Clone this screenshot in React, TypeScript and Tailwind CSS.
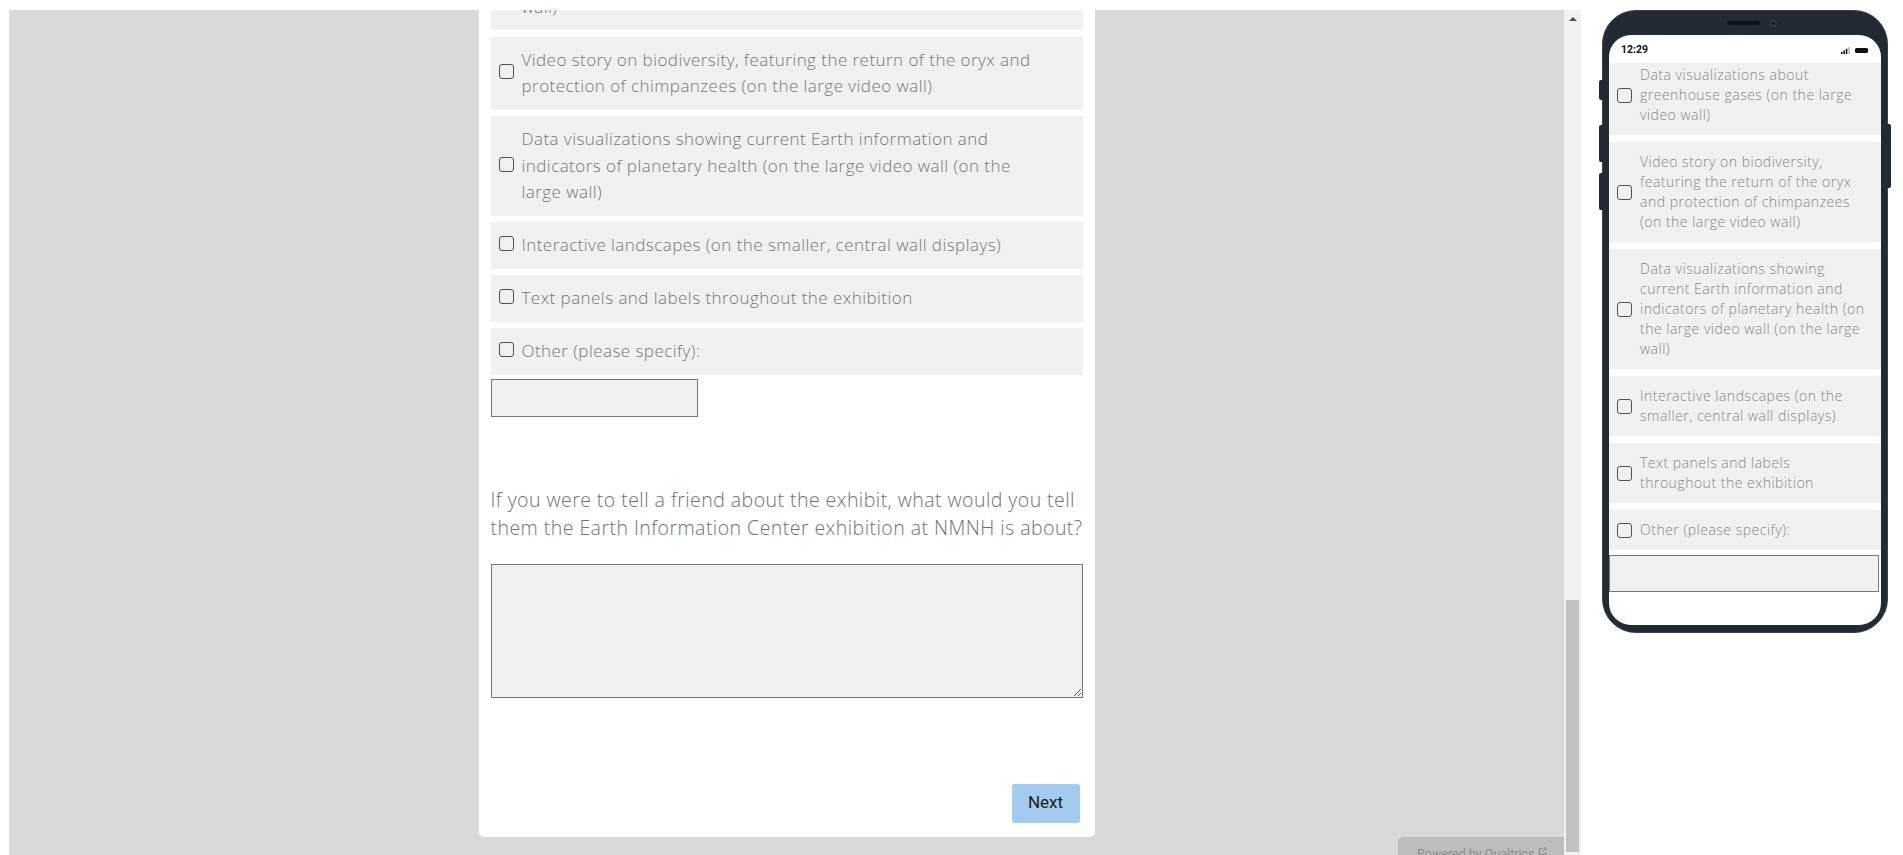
import React from 'react';

const mainOptions: string[][] = [
  ['Data visualizations about greenhouse gases (on the large video', 'wall)'],
  ['Video story on biodiversity, featuring the return of the oryx and', 'protection of chimpanzees (on the large video wall)'],
  [
    'Data visualizations showing current Earth information and',
    'indicators of planetary health (on the large video wall (on the',
    'large wall)',
  ],
  ['Interactive landscapes (on the smaller, central wall displays)'],
  ['Text panels and labels throughout the exhibition'],
  ['Other (please specify):'],
];

const phoneOptions: string[][] = [
  ['Data visualizations about', 'greenhouse gases (on the large', 'video wall)'],
  ['Video story on biodiversity,', 'featuring the return of the oryx', 'and protection of chimpanzees', '(on the large video wall)'],
  [
    'Data visualizations showing',
    'current Earth information and',
    'indicators of planetary health (on',
    'the large video wall (on the large',
    'wall)',
  ],
  ['Interactive landscapes (on the', 'smaller, central wall displays)'],
  ['Text panels and labels', 'throughout the exhibition'],
  ['Other (please specify):'],
];

function Lines({ lines }: { lines: string[] }) {
  return (
    <>
      {lines.map((l, i) => (
        <React.Fragment key={i}>
          {i > 0 && <br />}
          {l}
        </React.Fragment>
      ))}
    </>
  );
}

function MainOption({ lines }: { lines: string[] }) {
  return (
    <label className="flex items-center gap-[8px] bg-[#f0f0f0] py-[10px] pl-[8px] pr-[14px]">
      <span className="-mt-[3px] h-[15px] w-[15px] shrink-0 rounded-[3px] border border-[#505050]" />
      <span className="whitespace-nowrap text-[17px] font-light leading-[26.5px] tracking-[0.45px] text-[#777]">
        <Lines lines={lines} />
      </span>
    </label>
  );
}

function PhoneOption({ lines }: { lines: string[] }) {
  return (
    <label className="flex items-center gap-[8px] bg-[#f0f0f0] py-[10px] pl-[8px] pr-[10px]">
      <span className="h-[15px] w-[15px] shrink-0 rounded-[3px] border border-[#505050]" />
      <span className="whitespace-nowrap text-[14px] font-light leading-[20px] tracking-[0.5px] text-[#888]">
        <Lines lines={lines} />
      </span>
    </label>
  );
}

function SignalIcon() {
  return (
    <svg width="9" height="7" viewBox="0 0 9 7">
      <rect x="0" y="5" width="1.6" height="2" fill="#111" />
      <rect x="2.4" y="3.5" width="1.6" height="3.5" fill="#111" />
      <rect x="4.8" y="1.8" width="1.6" height="5.2" fill="#111" />
      <rect x="7.2" y="0" width="1.6" height="7" fill="#bbb" />
    </svg>
  );
}

function Phone() {
  return (
    <div className="relative ml-[21px] h-[623px] w-[286px] shrink-0">
      {/* side buttons */}
      <div className="absolute left-[-3px] top-[70px] h-[20px] w-[4px] rounded-l-[2px] bg-[#222a33]" />
      <div className="absolute left-[-3px] top-[115px] h-[37px] w-[4px] rounded-l-[2px] bg-[#222a33]" />
      <div className="absolute left-[-3px] top-[163px] h-[37px] w-[4px] rounded-l-[2px] bg-[#222a33]" />
      <div className="absolute right-[-3px] top-[114px] h-[64px] w-[4px] rounded-r-[2px] bg-[#222a33]" />

      <div className="flex h-full w-full flex-col rounded-[34px] border border-[#39414b] bg-[#222a33] px-[6px] pb-[7px]">
        {/* speaker + camera */}
        <div className="flex h-[24px] items-center justify-center gap-[10px] pl-[14px]">
          <div className="h-[4px] w-[33px] rounded-full bg-[#0f1318]" />
          <svg width="7" height="7" viewBox="0 0 7 7">
            <circle cx="3.5" cy="3.5" r="2.6" fill="#151a20" stroke="#4b535d" strokeWidth="1" />
          </svg>
        </div>

        <div className="flex flex-1 flex-col overflow-hidden rounded-[22px] bg-white">
          <div className="flex h-[28px] shrink-0 items-center justify-between pl-[12px] pr-[13px] pt-[2px] font-['Roboto',sans-serif]">
            <span className="text-[10.5px] font-bold text-[#111]">12:29</span>
            <div className="flex items-center gap-[5px]">
              <SignalIcon />
              <div className="h-[5px] w-[13px] rounded-[1.5px] bg-[#111]" />
            </div>
          </div>
          <div className="flex-1 overflow-hidden">
            <div className="-mt-[8px] flex flex-col gap-[7px]">
              {phoneOptions.map((o, i) => (
                <PhoneOption key={i} lines={o} />
              ))}
            </div>
            <div className="mr-[2px] mt-[5px] h-[37px] border border-[#777] bg-[#f0f0f0]" />
          </div>
        </div>
      </div>
    </div>
  );
}

export default function App() {
  return (
    <div className="flex h-screen overflow-hidden bg-white pl-[9px] pt-[10px] font-['Open_Sans',sans-serif]">
      {/* survey preview */}
      <div className="flex h-[880px] w-[1572px] shrink-0">
        <div className="relative flex-1 overflow-hidden bg-[#d9d9d9]">
          <div className="mx-auto -mt-[53px] w-[616px] rounded-b-[5px] bg-white px-[12px] pb-[14px]">
            <div className="flex flex-col gap-[6.5px]">
              {mainOptions.map((o, i) => (
                <MainOption key={i} lines={o} />
              ))}
            </div>
            <div className="mt-[4px] h-[38px] w-[207px] border border-[#777] bg-[#f0f0f0]" />

            <p className="mt-[69px] whitespace-nowrap text-[19.5px] font-light leading-[28px] tracking-[0.45px] text-[#707070]">
              If you were to tell a friend about the exhibit, what would you tell
              <br />
              them the Earth Information Center exhibition at NMNH is about?
            </p>

            <textarea className="mt-[22px] block h-[134px] w-full border border-[#777] bg-[#f0f0f0] outline-none" />

            <div className="mt-[86px] flex justify-end pr-[3px]">
              <button className="h-[39px] w-[68px] rounded-[3px] bg-[#a3cbee] font-['Roboto',sans-serif] text-[17px] text-[#1b1b1b]">
                Next
              </button>
            </div>
          </div>

          <a className="absolute right-0 top-[827px] flex h-[40px] w-[166px] items-start rounded-tl-[5px] bg-[#bdbdbd] pl-[19px] pt-[8px] font-['Roboto',sans-serif] text-[12.5px] text-[#8c8c8c]">
            Powered by Qualtrics
            <svg className="ml-[3px] mt-[2px]" width="9" height="9" viewBox="0 0 9 9" fill="none" stroke="#8c8c8c" strokeWidth="1">
              <path d="M4 1.5H1.5v6h6V5M5.5 1h2.5v2.5M8 1 4.5 4.5" />
            </svg>
          </a>
        </div>

        {/* scrollbar */}
        <div className="relative w-[17px] bg-[#f1f1f1]">
          <div className="absolute left-[5px] top-[7px] h-0 w-0 border-x-[4px] border-b-[4px] border-x-transparent border-b-[#505050]" />
          <div className="absolute left-[2px] right-[2px] top-[590px] h-[252px] bg-[#c1c1c1]" />
        </div>
      </div>

      <Phone />
    </div>
  );
}
